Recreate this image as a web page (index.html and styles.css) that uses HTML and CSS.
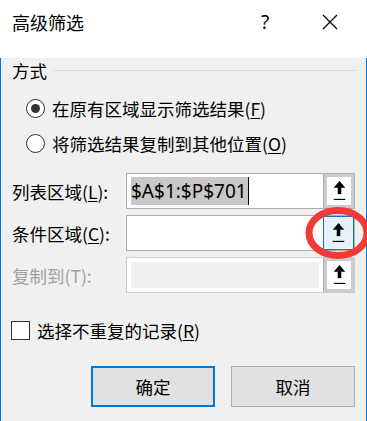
FILE: index.html
```html
<!DOCTYPE html>
<html lang="zh-CN">
<head>
  <meta charset="UTF-8">
  <meta name="viewport" content="width=device-width, initial-scale=1.0">
  <title>高级筛选</title>
  <link rel="stylesheet" href="styles.css">
</head>
<body>
  <div class="dialog">
    <div class="titlebar">
      <span class="title">高级筛选</span>
      <span class="help">?</span>
      <span class="close">
        <svg width="16" height="16" viewBox="0 0 16 16"><path d="M1 1L15 15M15 1L1 15" stroke="#000" stroke-width="1.2" fill="none"/></svg>
      </span>
    </div>

    <div class="content">
      <div class="group-head">
        <span>方式</span>
        <span class="rule"></span>
      </div>

      <label class="radio">
        <span class="dot checked"></span>
        <span>在原有区域显示筛选结果(<u>F</u>)</span>
      </label>
      <label class="radio">
        <span class="dot"></span>
        <span>将筛选结果复制到其他位置(<u>O</u>)</span>
      </label>

      <div class="field">
        <span class="field-label">列表区域(<u>L</u>):</span>
        <div class="box">
          <div class="value"><span class="selected">$A$1:$P$701</span><span class="caret"></span></div>
          <button class="pick"><span class="pick-inner">
            <svg width="13" height="21" viewBox="0 0 12 20"><path d="M6 0L11.5 6.5H0.5Z"/><rect x="4.3" y="6" width="3.4" height="6.5"/><rect x="0.5" y="17" width="11" height="1.1"/></svg>
          </span></button>
        </div>
      </div>

      <div class="field">
        <span class="field-label">条件区域(<u>C</u>):</span>
        <div class="box">
          <div class="value"></div>
          <button class="pick hover"><span class="pick-inner">
            <svg width="13" height="21" viewBox="0 0 12 20"><path d="M6 0L11.5 6.5H0.5Z"/><rect x="4.3" y="6" width="3.4" height="6.5"/><rect x="0.5" y="17" width="11" height="1.1"/></svg>
          </span></button>
        </div>
      </div>

      <div class="field disabled">
        <span class="field-label">复制到(T):</span>
        <div class="box">
          <div class="value"><span class="fill"></span></div>
          <button class="pick"><span class="pick-inner">
            <svg width="13" height="21" viewBox="0 0 12 20"><path d="M6 0L11.5 6.5H0.5Z"/><rect x="4.3" y="6" width="3.4" height="6.5"/><rect x="0.5" y="17" width="11" height="1.1"/></svg>
          </span></button>
        </div>
      </div>

      <label class="check">
        <span class="box-tick"></span>
        <span>选择不重复的记录(<u>R</u>)</span>
      </label>

      <div class="actions">
        <button class="btn default">确定</button>
        <button class="btn">取消</button>
      </div>
    </div>

    <svg class="callout" width="367" height="421" viewBox="0 0 367 421">
      <ellipse cx="338" cy="233" rx="29" ry="22.5" fill="none" stroke="#f03a3a" stroke-width="7"/>
    </svg>
  </div>
</body>
</html>
```

FILE: styles.css
```css
* {
  box-sizing: border-box;
}
body {
  margin: 0;
  font-family: "Noto Sans CJK SC", "Noto Sans", sans-serif;
  font-size: 17.5px;
  color: #000;
}
u {
  text-decoration: underline;
  text-underline-offset: 2px;
}
.dialog {
  position: relative;
  width: 367px;
  height: 421px;
  overflow: hidden;
}
.titlebar {
  height: 44px;
  background: #fff;
  display: flex;
  align-items: center;
  padding-left: 12px;
}
.title {
  flex: 1;
  font-size: 18px;
}
.help {
  width: 20px;
  text-align: center;
  margin-right: 47px;
  font-family: "Noto Sans", sans-serif;
  font-size: 19px;
}
.close {
  width: 16px;
  height: 16px;
  margin-right: 29px;
  display: flex;
}
.content {
  height: 377px;
  background: #f0f0f0;
  border: 1px solid #0078d7;
  border-top: none;
  padding: 0 11px 0 11px;
}
.group-head {
  display: flex;
  align-items: center;
  height: 24px;
  margin-top: 14px;
}
.rule {
  flex: 1;
  height: 1px;
  background: #dcdcdc;
  margin-left: 6px;
  margin-right: -2px;
}
.radio {
  display: flex;
  align-items: center;
  height: 35px;
  padding-left: 14px;
}
.radio:first-of-type {
  margin-top: 9px;
}
.dot {
  width: 19px;
  height: 19px;
  border: 1.5px solid #333;
  border-radius: 50%;
  background: #fff;
  margin-right: 7px;
  display: flex;
  align-items: center;
  justify-content: center;
}
.dot.checked::after {
  content: "";
  width: 9px;
  height: 9px;
  border-radius: 50%;
  background: #333;
}
.field {
  display: flex;
  align-items: center;
  height: 36px;
  margin-top: 6px;
}
.radio + .field {
  margin-top: 12px;
}
.field-label {
  width: 114px;
}
.box {
  width: 229px;
  height: 36px;
  border: 1px solid #adadad;
  background: #fff;
  display: flex;
}
.value {
  flex: 1;
  display: flex;
  align-items: center;
  padding-left: 4px;
  font-family: "Noto Sans", sans-serif;
  font-size: 19px;
}
.selected {
  background: #c8c8c8;
  height: 28px;
  line-height: 28px;
  padding-right: 1px;
}
.caret {
  width: 1px;
  height: 28px;
  background: #000;
}
.pick {
  width: 31px;
  height: 100%;
  margin: 0;
  padding: 3px 3px 3px 3px;
  border: none;
  border-left: 1px solid #adadad;
  background: #cccccc;
  display: flex;
}
.pick-inner {
  flex: 1;
  background: #fff;
  display: flex;
  align-items: center;
  justify-content: center;
}
.pick.hover {
  border: 1px solid #0078d7;
  background: #e5f1fb;
  padding: 2px;
}
.pick.hover .pick-inner {
  background: #e5f1fb;
}
.disabled .field-label {
  color: #a0a0a0;
}
.disabled .box {
  border-color: #cccccc;
}
.disabled .value {
  padding: 4px;
}
.fill {
  flex: 1;
  align-self: stretch;
  background: #f0f0f0;
}
.check {
  display: flex;
  align-items: center;
  height: 30px;
  margin-top: 22px;
}
.box-tick {
  width: 19px;
  height: 19px;
  border: 1px solid #333;
  background: #fff;
  margin-left: -1px;
  margin-right: 7px;
}
.actions {
  display: flex;
  justify-content: flex-end;
  gap: 16px;
  margin-top: 21px;
}
.btn {
  width: 124px;
  height: 41px;
  background: #e1e1e1;
  border: 1px solid #adadad;
  font-family: "Noto Sans CJK SC", sans-serif;
  font-size: 17.5px;
  color: #000;
  padding: 0;
}
.btn.default {
  border: 2px solid #0078d7;
}
.callout {
  position: absolute;
  left: 0;
  top: 0;
  pointer-events: none;
}
```
